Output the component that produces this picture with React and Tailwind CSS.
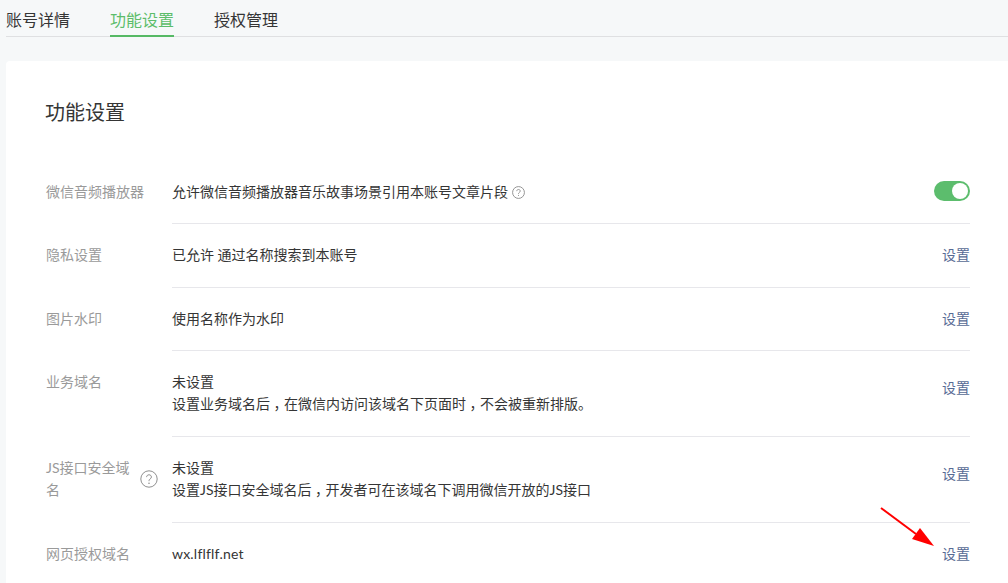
import React from "react";

const FONT = { fontFamily: 'Lato, "Noto Sans CJK SC", "Noto Sans", sans-serif' };

function HelpIcon({ size, width = 1 }) {
  return (
    <svg width={size} height={size} viewBox="0 0 18 18" fill="none" className="shrink-0">
      <circle cx="9" cy="9" r="8.2" stroke="#8f8f8f" strokeWidth={width} />
      <path d="M6.6 7.1c0-1.4 1-2.3 2.4-2.3s2.4.9 2.4 2.2c0 1-.6 1.5-1.3 2-.7.5-1.1.9-1.1 1.7v.5" stroke="#8f8f8f" strokeWidth={width} />
      <circle cx="9" cy="13.2" r=".8" fill="#8f8f8f" />
    </svg>
  );
}

function SetLink({ offset }) {
  return <a className={`text-sm leading-[22px] text-[#576b95] shrink-0 ${offset}`}>设置</a>;
}

// the comma sits in the middle of its box in the picture
function Comma() {
  return <span className="inline-block w-[14px] text-center [font-feature-settings:'halt']">，</span>;
}

function Row({ label, right, pad = "pt-[20px] pb-[21px]", labelPad = "pt-[20px]", last, children }) {
  return (
    <div className="flex">
      <div className={`w-[126px] shrink-0 text-sm leading-[22px] text-[#9a9a9a] ${labelPad}`}>{label}</div>
      <div className={`flex-1 flex justify-between ${pad} ${last ? "" : "border-b border-[#e7e7eb]"}`}>
        <div className="text-sm leading-[22px] text-[#353535]">{children}</div>
        {right}
      </div>
    </div>
  );
}

export default function App() {
  return (
    <div className="relative h-[583px] overflow-hidden bg-[#f6f8f9]" style={FONT}>
      {/* tabs */}
      <div className="ml-[6px] h-[37px] flex gap-10 border-b border-[#dfe0e2] text-base">
        <div className="leading-[39px] text-[#353535]">账号详情</div>
        <div className="h-[37px] leading-[39px] text-[#5cbd6a] border-b-2 border-[#56b965]">功能设置</div>
        <div className="leading-[39px] text-[#353535]">授权管理</div>
      </div>

      {/* card */}
      <div className="ml-[6px] mt-[24px] bg-white rounded-tl-[4px] pl-[40px] pr-[38px] pt-[36px]">
        <h2 className="-ml-px text-xl leading-[30px] text-[#353535] mb-[33px]">功能设置</h2>

        <Row
          label="微信音频播放器"
          pad="pt-[21px] pb-[20px]"
          labelPad="pt-[21px]"
          right={
            <div className="w-9 h-5 rounded-full bg-[#5cbd6d] flex justify-end items-center pr-[2px]">
              <div className="w-4 h-4 rounded-full bg-white"></div>
            </div>
          }
        >
          <div className="flex items-center gap-1">
            允许微信音频播放器音乐故事场景引用本账号文章片段
            <HelpIcon size={13} width={1.3} />
          </div>
        </Row>
        <Row label="隐私设置" right={<SetLink offset="" />}>已允许 通过名称搜索到本账号</Row>
        <Row label="图片水印" pad="pt-[20px] pb-[20px]" right={<SetLink offset="" />}>使用名称作为水印</Row>
        <Row label="业务域名" right={<SetLink offset="mt-[6px]" />}>
          <div>未设置</div>
          <div>设置业务域名后<Comma />在微信内访问该域名下页面时<Comma />不会被重新排版。</div>
        </Row>
        <Row
          label={
            <div className="flex items-center">
              <div className="w-[90px]">JS接口安全域名</div>
              <div className="ml-[4px]"><HelpIcon size={18} /></div>
            </div>
          }
          right={<SetLink offset="mt-[6px]" />}
        >
          <div>未设置</div>
          <div>设置JS接口安全域名后<Comma />开发者可在该域名下调用微信开放的JS接口</div>
        </Row>
        <Row label="网页授权域名" right={<SetLink offset="" />} last>
          <span className="tracking-[0.2px]">wx.lflflf.net</span>
        </Row>
      </div>

      {/* annotation arrow */}
      <svg className="absolute left-[875px] top-[500px]" width="70" height="55" viewBox="0 0 70 55" fill="none">
        <path d="M6 8L41 34" stroke="#ff0000" strokeWidth="2" />
        <path d="M59 46L37 39L45 28Z" fill="#ff0000" />
      </svg>
    </div>
  );
}
